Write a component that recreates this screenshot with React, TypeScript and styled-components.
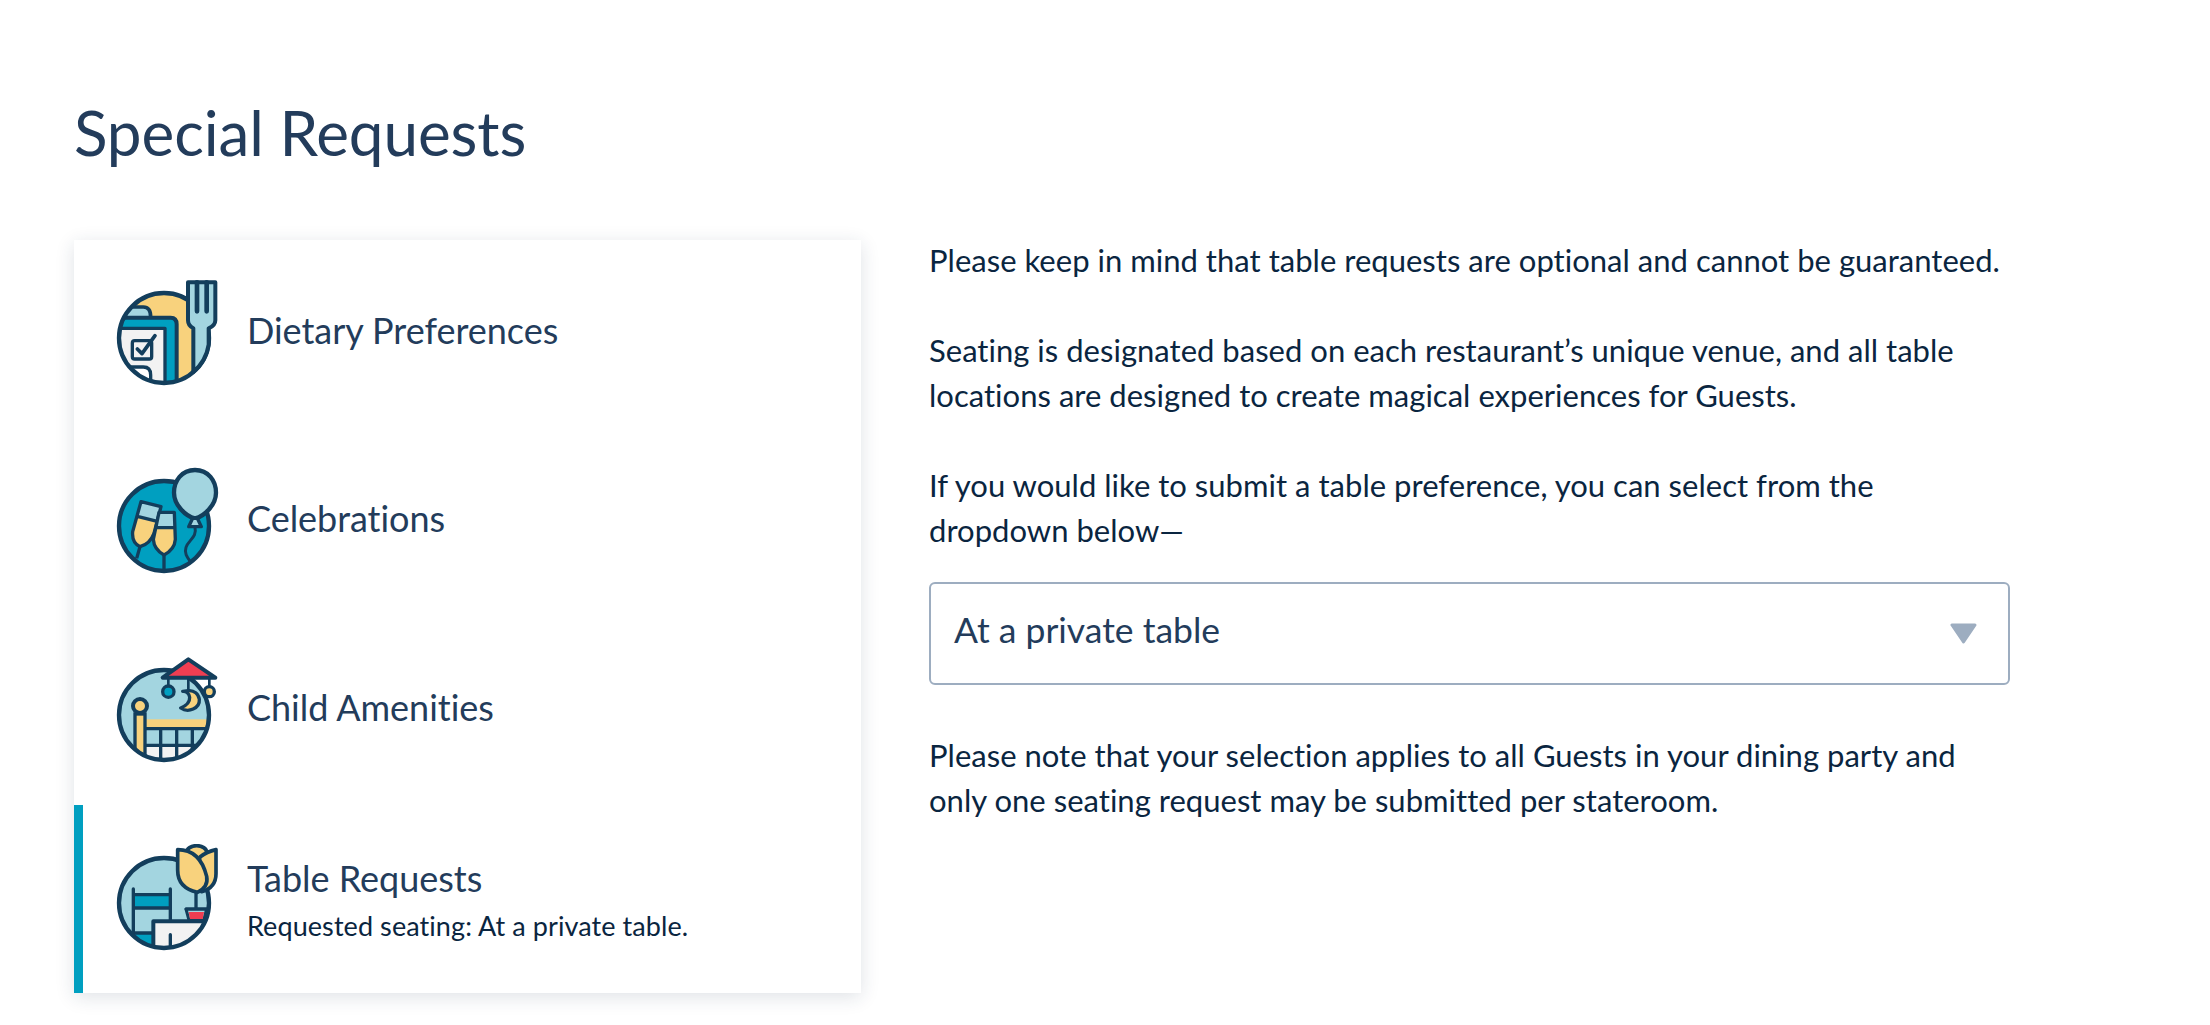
import React from 'react';
import styled, { createGlobalStyle } from 'styled-components';

const Global = createGlobalStyle`
  html, body { margin: 0; padding: 0; background: #fff; }
  body { font-family: Lato, "Open Sans", sans-serif; color: #0a2540; }
`;

const Page = styled.main`
  width: 2210px;
  height: 1025px;
  box-sizing: border-box;
  padding: 93px 0 0 74px;
  overflow: hidden;
`;

const Heading = styled.h1`
  margin: 0 0 53px;
  height: 94px;
  font-size: 62px;
  line-height: 78px;
  font-weight: 400;
  letter-spacing: -0.1px;
  color: #233c5b;
`;

const Columns = styled.div`
  display: flex;
  align-items: flex-start;
  gap: 68px;
`;

const Card = styled.nav`
  width: 787px;
  background: #fff;
  box-shadow: 0 4px 18px rgba(30, 50, 80, 0.14);
`;

const Row = styled.div<{ $active?: boolean }>`
  height: 188.25px;
  box-sizing: border-box;
  display: flex;
  align-items: center;
  gap: 27px;
  padding-left: ${(p) => (p.$active ? '32px' : '41px')};
  border-left: ${(p) => (p.$active ? '9px solid #009fc0' : '0')};
`;

const IconSvg = styled.svg`
  width: 105px;
  height: 110px;
  flex: none;
  display: block;
`;

const RowText = styled.div<{ $withSub?: boolean }>`
  display: flex;
  flex-direction: column;
  gap: 11px;
  margin-top: ${(p) => (p.$withSub ? '0' : '-8px')};
`;

const RowTitle = styled.div`
  font-size: 36px;
  line-height: 44px;
  letter-spacing: -0.03px;
  color: #233c5b;
`;

const RowSub = styled.div`
  font-size: 27px;
  line-height: 30px;
  letter-spacing: 0.08px;
  color: #0a2540;
`;

const Details = styled.section`
  width: 1081px;
  margin-top: -2px;
`;

const Para = styled.p`
  margin: 0 0 45px;
  font-size: 31px;
  line-height: 45px;
  letter-spacing: 0.02px;
  color: #0a2540;
`;

const SelectBox = styled.div`
  height: 103px;
  box-sizing: border-box;
  margin: -16px 0 48px;
  padding: 0 31px 8px 23px;
  border: 2px solid #9dadc0;
  border-radius: 6px;
  display: flex;
  align-items: center;
  justify-content: space-between;
  font-size: 35.5px;
  color: #233c5b;
`;

const Arrow = styled.svg`
  width: 27px;
  height: 21px;
  display: block;
  margin-top: 8px;
`;

const DARK = '#133e5c';
const LIGHT = '#a3d5e0';
const BLUE = '#009fc0';
const YELLOW = '#f8d27d';
const PAPER = '#f2f2f2';
const RED = '#ef3e52';

const Dietary = () => (
  <IconSvg viewBox="165 148 315 330" aria-hidden>
    <defs>
      <clipPath id="c1"><circle cx="312" cy="325" r="135" /></clipPath>
    </defs>
    <circle cx="312" cy="325" r="135" fill={YELLOW} />
    <g clipPath="url(#c1)" stroke={DARK} strokeLinejoin="round">
      <path d="M170 250 L205 232 H250 Q272 232 272 262 V290 H170 Z" fill={LIGHT} strokeWidth="11" />
      <path d="M170 264 H332 Q350 264 350 284 V480 H170 Z" fill={BLUE} strokeWidth="12" />
      <path d="M170 296 H315 V480 H170 Z" fill={PAPER} strokeWidth="10" />
      <path d="M205 412 H250 Q272 412 272 436 V480 H205 Z" fill="#fff" strokeWidth="10" />
    </g>
    <rect x="217" y="333" width="58" height="55" rx="7" fill="none" stroke={DARK} strokeWidth="10" />
    <path d="M232 358 L246 372 L285 318" fill="none" stroke={DARK} strokeWidth="11" strokeLinecap="round" strokeLinejoin="round" />
    <circle cx="312" cy="325" r="135" fill="none" stroke={DARK} strokeWidth="13" />
    <path d="M384 158 H466 V272 Q466 288 446 296 V345 A135 135 0 0 1 400 427 V296 Q384 288 384 272 Z" fill={LIGHT} stroke={DARK} strokeWidth="12" strokeLinejoin="round" />
    <path d="M411 158 V245 M440 158 V245" stroke={DARK} strokeWidth="14" strokeLinecap="round" />
  </IconSvg>
);

const Celebrations = () => (
  <IconSvg viewBox="165 51 315 330" aria-hidden>
    <circle cx="312" cy="228" r="135" fill={BLUE} stroke={DARK} strokeWidth="13" />
    <path d="M240 290 L230 325 M312 315 V360" stroke={DARK} strokeWidth="10" />
    <path d="M243 155 L303 170 L282 250 Q270 282 240 290 Q215 278 218 245 Z" fill={YELLOW} />
    <path d="M243 155 L303 170 L292 214 L232 199 Z" fill={LIGHT} />
    <path d="M243 155 L303 170 L282 250 Q270 282 240 290 Q215 278 218 245 Z M232 199 L292 214" fill="none" stroke={DARK} strokeWidth="10" strokeLinejoin="round" />
    <path d="M297 187 H343 L346 268 Q344 298 312 315 Q282 298 280 268 Z" fill={YELLOW} />
    <path d="M297 187 H343 L345 233 H285 Z" fill={LIGHT} />
    <path d="M297 187 H343 L346 268 Q344 298 312 315 Q282 298 280 268 Z M285 233 H345" fill="none" stroke={DARK} strokeWidth="10" strokeLinejoin="round" />
    <path d="M405 232 C412 262 385 270 378 292 C372 310 382 322 392 336" fill="none" stroke={DARK} strokeWidth="9" />
    <path d="M405 60 C445 60 468 92 468 128 C468 165 432 200 405 205 C378 200 342 165 342 128 C342 92 365 60 405 60 Z" fill={LIGHT} stroke={DARK} strokeWidth="13" />
    <path d="M398 205 L386 230 H424 L412 205 Z" fill={LIGHT} stroke={DARK} strokeWidth="10" strokeLinejoin="round" />
  </IconSvg>
);

const ChildAmenities = () => (
  <IconSvg viewBox="165 48 315 330" aria-hidden>
    <defs>
      <clipPath id="c3"><circle cx="312" cy="225" r="135" /></clipPath>
    </defs>
    <circle cx="312" cy="225" r="135" fill={LIGHT} />
    <g clipPath="url(#c3)">
      <rect x="255" y="318" width="200" height="60" fill={PAPER} />
      <rect x="255" y="238" width="200" height="26" fill={YELLOW} />
      <path d="M250 266 H450 M250 316 H450 M302 265 V370 M350 265 V370 M397 265 V370" stroke={DARK} strokeWidth="10" />
      <rect x="225" y="222" width="30" height="160" fill={YELLOW} stroke={DARK} strokeWidth="10" />
    </g>
    <circle cx="240" cy="198" r="21" fill={YELLOW} stroke={DARK} strokeWidth="12" />
    <circle cx="312" cy="225" r="135" fill="none" stroke={DARK} strokeWidth="13" />
    <path d="M325 113 V140 M385 113 V152 M448 113 V140" stroke={DARK} strokeWidth="8" />
    <path d="M385 58 L308 113 H466 Z" fill={RED} stroke={DARK} strokeWidth="12" strokeLinejoin="round" />
    <circle cx="325" cy="155" r="17" fill={BLUE} stroke={DARK} strokeWidth="10" />
    <circle cx="448" cy="155" r="15" fill={YELLOW} stroke={DARK} strokeWidth="10" />
    <path d="M368 154 C392 152 402 188 362 204 C385 220 420 205 418 178 C416 162 402 150 385 152 Z" fill={YELLOW} stroke={DARK} strokeWidth="10" strokeLinejoin="round" />
  </IconSvg>
);

const TableRequests = () => (
  <IconSvg viewBox="165 133 315 330" aria-hidden>
    <defs>
      <clipPath id="c4"><circle cx="312" cy="310" r="135" /></clipPath>
    </defs>
    <circle cx="312" cy="310" r="135" fill={LIGHT} />
    <g clipPath="url(#c4)">
      <rect x="222" y="285" width="106" height="40" fill={BLUE} />
      <rect x="222" y="402" width="106" height="50" fill={BLUE} />
      <path d="M220 268 V450 M331 268 V370 M220 285 H331 M220 325 H331 M220 400 H285" stroke={DARK} strokeWidth="10" strokeLinecap="round" />
      <path d="M280 365 H470 V470 H280 Z" fill={PAPER} stroke={DARK} strokeWidth="12" strokeLinejoin="round" />
      <path d="M331 405 V460" stroke={DARK} strokeWidth="10" strokeLinecap="round" />
    </g>
    <circle cx="312" cy="310" r="135" fill="none" stroke={DARK} strokeWidth="13" />
    <path d="M408 280 V326" stroke={DARK} strokeWidth="10" />
    <path d="M378 328 H440 L431 362 H387 Z" fill={LIGHT} stroke={DARK} strokeWidth="9" strokeLinejoin="round" />
    <path d="M386 337 H432 L428 358 H390 Z" fill={RED} />
    <path d="M378 328 H440" stroke={DARK} strokeWidth="9" strokeLinecap="round" />
    <ellipse cx="410" cy="158" rx="30" ry="20" fill={YELLOW} stroke={DARK} strokeWidth="11" />
    <path d="M468 150 V222 Q468 264 425 276 Q400 250 420 172 Q440 156 468 150 Z" fill={YELLOW} stroke={DARK} strokeWidth="11" strokeLinejoin="round" />
    <path d="M353 150 Q420 150 440 230 Q446 262 412 278 Q353 265 353 212 Z" fill={YELLOW} stroke={DARK} strokeWidth="11" strokeLinejoin="round" />
  </IconSvg>
);

export default function App() {
  return (
    <>
      <Global />
      <Page>
        <Heading>Special Requests</Heading>
        <Columns>
          <Card>
            <Row>
              <Dietary />
              <RowText><RowTitle>Dietary Preferences</RowTitle></RowText>
            </Row>
            <Row>
              <Celebrations />
              <RowText><RowTitle>Celebrations</RowTitle></RowText>
            </Row>
            <Row>
              <ChildAmenities />
              <RowText><RowTitle>Child Amenities</RowTitle></RowText>
            </Row>
            <Row $active>
              <TableRequests />
              <RowText $withSub>
                <RowTitle>Table Requests</RowTitle>
                <RowSub>Requested seating: At a private table.</RowSub>
              </RowText>
            </Row>
          </Card>
          <Details>
            <Para>Please keep in mind that table requests are optional and cannot be guaranteed.</Para>
            <Para>Seating is designated based on each restaurant’s unique venue, and all table locations are designed to create magical experiences for Guests.</Para>
            <Para>If you would like to submit a table preference, you can select from the dropdown below—</Para>
            <SelectBox>
              <span>At a private table</span>
              <Arrow viewBox="0 0 27 21" aria-hidden>
                <path d="M2 2 H25 L13.5 19 Z" fill="#9dadc0" stroke="#9dadc0" strokeWidth="3" strokeLinejoin="round" />
              </Arrow>
            </SelectBox>
            <Para>Please note that your selection applies to all Guests in your dining party and only one seating request may be submitted per stateroom.</Para>
          </Details>
        </Columns>
      </Page>
    </>
  );
}
